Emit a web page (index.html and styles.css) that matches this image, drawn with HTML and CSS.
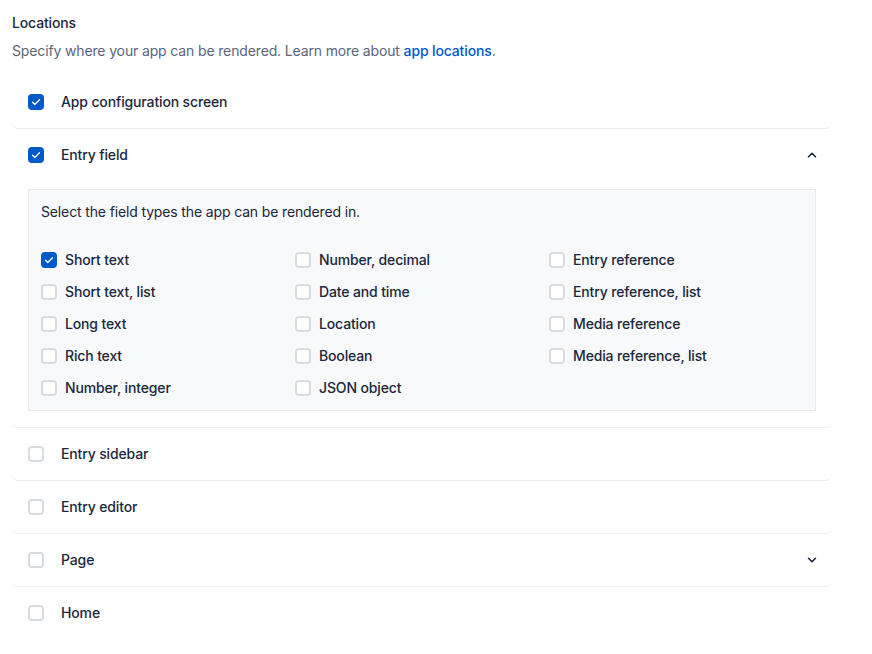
FILE: index.html
```html
<!DOCTYPE html>
<html>
<head>
<meta charset="utf-8">
<link rel="stylesheet" href="styles.css">
</head>
<body>
<div class="page">
  <h2 class="title">Locations</h2>
  <p class="desc">Specify where your app can be rendered. Learn more about <a href="#">app locations</a>.</p>

  <div class="list">
    <div class="row">
      <div class="row-head">
        <span class="cb checked"><svg viewBox="0 0 16 16"><path d="M4.5 8.2l2.3 2.3 4.7-4.8"/></svg></span>
        <span class="label">App configuration screen</span>
      </div>
    </div>

    <div class="row open">
      <div class="row-head">
        <span class="cb checked"><svg viewBox="0 0 16 16"><path d="M4.5 8.2l2.3 2.3 4.7-4.8"/></svg></span>
        <span class="label">Entry field</span>
        <svg class="chev" viewBox="0 0 16 16"><path d="M4.5 9.8L8 6.3l3.5 3.5"/></svg>
      </div>
      <div class="panel">
        <p class="panel-text">Select the field types the app can be rendered in.</p>
        <div class="grid">
          <div class="opt"><span class="cb small checked"><svg viewBox="0 0 16 16"><path d="M4.5 8.2l2.3 2.3 4.7-4.8"/></svg></span>Short text</div>
          <div class="opt"><span class="cb small"></span>Number, decimal</div>
          <div class="opt"><span class="cb small"></span>Entry reference</div>
          <div class="opt"><span class="cb small"></span>Short text, list</div>
          <div class="opt"><span class="cb small"></span>Date and time</div>
          <div class="opt"><span class="cb small"></span>Entry reference, list</div>
          <div class="opt"><span class="cb small"></span>Long text</div>
          <div class="opt"><span class="cb small"></span>Location</div>
          <div class="opt"><span class="cb small"></span>Media reference</div>
          <div class="opt"><span class="cb small"></span>Rich text</div>
          <div class="opt"><span class="cb small"></span>Boolean</div>
          <div class="opt"><span class="cb small"></span>Media reference, list</div>
          <div class="opt"><span class="cb small"></span>Number, integer</div>
          <div class="opt"><span class="cb small"></span>JSON object</div>
        </div>
      </div>
    </div>

    <div class="row">
      <div class="row-head">
        <span class="cb"></span>
        <span class="label">Entry sidebar</span>
      </div>
    </div>

    <div class="row">
      <div class="row-head">
        <span class="cb"></span>
        <span class="label">Entry editor</span>
      </div>
    </div>

    <div class="row">
      <div class="row-head">
        <span class="cb"></span>
        <span class="label">Page</span>
        <svg class="chev" viewBox="0 0 16 16"><path d="M4.5 6.3L8 9.8l3.5-3.5"/></svg>
      </div>
    </div>

    <div class="row last">
      <div class="row-head">
        <span class="cb"></span>
        <span class="label">Home</span>
      </div>
    </div>
  </div>
</div>
</body>
</html>
```

FILE: styles.css
```css
* { box-sizing: border-box; }
html, body { margin: 0; padding: 0; background: #fff; }
body {
  font-family: Inter, "Noto Sans", "Liberation Sans", sans-serif;
  font-size: 14px;
  line-height: 20px;
  letter-spacing: -0.14px;
  color: #1b273a;
}
.page {
  width: 820px;
  margin-left: 12px;
  padding-top: 13px;
}
.title {
  margin: 0;
  font-size: 14px;
  line-height: 20px;
  font-weight: 500;
  color: #1b273a;
}
.desc {
  margin: 8px 0 15px;
  color: #5a657c;
}
.desc a {
  color: #0059c8;
  font-weight: 500;
  text-decoration: none;
}
.row {
  border-bottom: 1px solid #edf0f2;
  border-radius: 6px;
}
.row.last { border-bottom-color: transparent; }
.row-head {
  display: flex;
  align-items: center;
  padding: 16px 12px 16px 16px;
  height: 52px;
}
.label {
  margin-left: 17px;
  font-weight: 500;
  flex: 1;
}
.cb {
  width: 16px;
  height: 16px;
  flex: none;
  border: 2px solid #d5dde2;
  border-radius: 4px;
  background: #fff;
  display: inline-flex;
  align-items: center;
  justify-content: center;
}
.cb.checked {
  background: #0059c8;
  border-color: #0059c8;
}
.cb svg {
  width: 16px;
  height: 16px;
  flex: none;
  fill: none;
  stroke: #fff;
  stroke-width: 1.3;
  stroke-linecap: round;
  stroke-linejoin: round;
}
.chev {
  width: 16px;
  height: 16px;
  fill: none;
  stroke: #1b273a;
  stroke-width: 1.6;
  stroke-linecap: round;
  stroke-linejoin: round;
}
.panel {
  margin: 8px 16px 16px;
  background: #f7f9fa;
  border: 1px solid #e7ebee;
  padding: 12px 12px 10px;
}
.panel-text {
  margin: 0;
}
.grid {
  margin-top: 26px;
  display: grid;
  grid-template-columns: repeat(3, 1fr);
  row-gap: 8px;
}
.opt {
  display: flex;
  align-items: center;
  height: 24px;
  font-weight: 500;
}
.opt .cb { margin-right: 8px; }
```
